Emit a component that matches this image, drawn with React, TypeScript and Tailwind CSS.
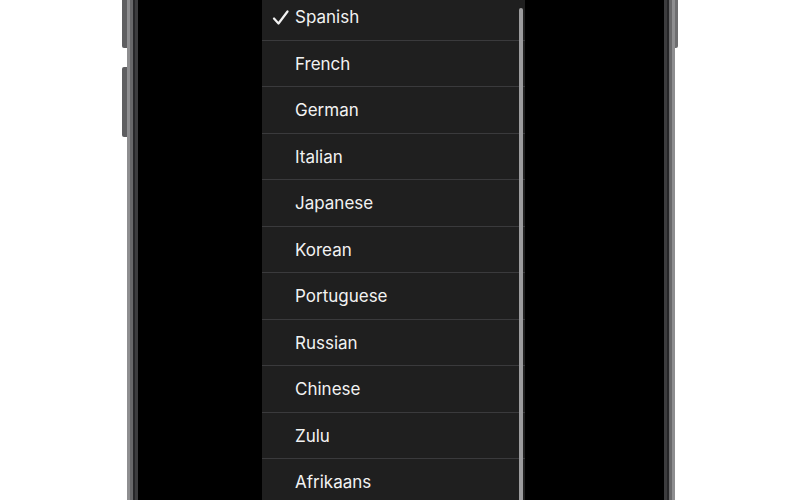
import React from 'react';

const languages = [
    'Spanish',
    'French',
    'German',
    'Italian',
    'Japanese',
    'Korean',
    'Portuguese',
    'Russian',
    'Chinese',
    'Zulu',
    'Afrikaans',
];

function Check() {
    return (
        <svg width="18" height="16" viewBox="0 0 18 16" className="shrink-0">
            <path d="M2 8.5 L6.5 13.5 L15.5 1.5" fill="none" stroke="#f2f2f2" strokeWidth="2.2" strokeLinecap="round" strokeLinejoin="round" />
        </svg>
    );
}

function MenuRow({ label, selected }: { label: string; selected: boolean }) {
    return (
        <div className="h-[46.5px] shrink-0 flex items-center border-b border-[#3a3a3c] pl-[10px] pt-[2px]">
            <div className="w-[23px] flex items-center">{selected && <Check />}</div>
            <span className="text-[17px] text-[#f2f2f2]">{label}</span>
        </div>
    );
}

export default function App() {
    return (
        <div
            className="w-[800px] h-[500px] bg-white flex overflow-hidden"
            style={{ fontFamily: 'Inter, "Noto Sans", sans-serif' }}
        >
            <div className="w-[122px] shrink-0" />

            {/* left side buttons */}
            <div className="w-[5px] shrink-0 flex flex-col">
                <div className="h-[48px] bg-[#5e5e60] rounded-bl-[2px]" />
                <div className="h-[19px]" />
                <div className="h-[70px] bg-[#5e5e60] rounded-l-[2px]" />
            </div>

            {/* phone frame */}
            <div className="w-[548px] shrink-0 h-full border-x-[3px] border-[#8e8e90]">
                <div className="h-full border-x-[3px] border-[#68686a]">
                    <div className="h-full border-x-[2px] border-[#262628]">
                        <div className="h-full border-x-[3px] border-[#3c3c3e] bg-black pl-[124px]">
                            <div className="relative w-[263px] h-full bg-[#1f1f1f] overflow-hidden">
                                <div className="flex flex-col -mt-[6px]">
                                    {languages.map((l, i) => (
                                        <MenuRow key={l} label={l} selected={i === 0} />
                                    ))}
                                </div>
                                {/* scroll indicator */}
                                <div className="absolute right-[2px] top-[8px] bottom-0 w-[4px] rounded-t-full bg-[#9c9c9e]" />
                            </div>
                        </div>
                    </div>
                </div>
            </div>

            {/* right side button */}
            <div className="w-[3px] shrink-0">
                <div className="h-[48px] bg-[#6e6e70] rounded-br-[2px]" />
            </div>
        </div>
    );
}
